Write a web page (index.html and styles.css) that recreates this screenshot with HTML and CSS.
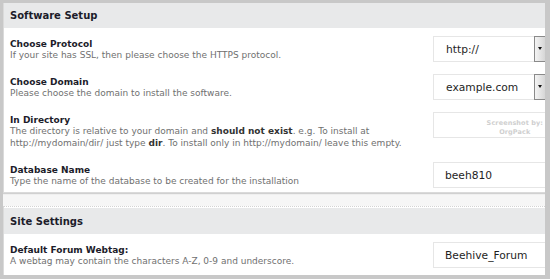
FILE: index.html
```html
<!DOCTYPE html>
<html lang="en">
<head>
    <meta charset="UTF-8">
    <meta name="viewport" content="width=device-width, initial-scale=1.0">
    <title>Software Setup</title>
    <link rel="stylesheet" href="styles.css">
</head>
<body>
    <div class="frame">
        <div class="panel">
            <div class="panel-head">Software Setup</div>

            <div class="row">
                <div class="info">
                    <div class="label">Choose Protocol</div>
                    <div class="desc">If your site has SSL, then please choose the HTTPS protocol.</div>
                </div>
                <div class="field">
                    <div class="select">
                        <span class="val">http://</span>
                        <span class="arrow"></span>
                    </div>
                </div>
            </div>

            <div class="row">
                <div class="info">
                    <div class="label">Choose Domain</div>
                    <div class="desc">Please choose the domain to install the software.</div>
                </div>
                <div class="field">
                    <div class="select">
                        <span class="val">example.com</span>
                        <span class="arrow"></span>
                    </div>
                </div>
            </div>

            <div class="row">
                <div class="info">
                    <div class="label">In Directory</div>
                    <div class="desc">The directory is relative to your domain and <b>should not exist</b>. e.g. To install at http://mydomain/dir/ just type <b>dir</b>. To install only in http://mydomain/ leave this empty.</div>
                </div>
                <div class="field">
                    <div class="input">
                        <span class="val"></span>
                        <span class="mark">Screenshot by:<br>OrgPack</span>
                    </div>
                </div>
            </div>

            <div class="row">
                <div class="info">
                    <div class="label">Database Name</div>
                    <div class="desc">Type the name of the database to be created for the installation</div>
                </div>
                <div class="field">
                    <div class="input"><span class="val">beeh810</span></div>
                </div>
            </div>
        </div>

        <div class="panel second">
            <div class="panel-head">Site Settings</div>

            <div class="row">
                <div class="info">
                    <div class="label">Default Forum Webtag:</div>
                    <div class="desc">A webtag may contain the characters A-Z, 0-9 and underscore.</div>
                </div>
                <div class="field">
                    <div class="input"><span class="val">Beehive_Forum</span></div>
                </div>
            </div>
        </div>
    </div>
</body>
</html>
```

FILE: styles.css
```css
html, body {
    margin: 0;
    padding: 0;
}

body {
    font-family: "DejaVu Sans", Verdana, sans-serif;
    color: #222;
    background: #c8c8c8;
}

.frame {
    width: 542px;
    height: 272px;
    margin: 3px 5px 4px 3px;
    background: #f6f6f6;
    overflow: hidden;
}

.panel {
    background: white;
    border: 1px solid #dadada;
    border-top: none;
    border-right: none;
    box-shadow: 0 1px 1px #d0d0d0;
    overflow: hidden;
}

.panel.second {
    margin-top: 13px;
    border-top: 1px dotted #d4d4d4;
}

.panel-head {
    height: 25px;
    line-height: 25px;
    padding-left: 6px;
    background: #e8e9ea;
    font-size: 10px;
    font-weight: bold;
    color: #1c1c2a;
}

.second .panel-head {
    height: 26px;
    line-height: 27px;
    border-top: 1px solid white;
}

.row {
    display: flex;
    align-items: flex-start;
    padding: 8px 0 4px 6px;
}

.second .row {
    padding-bottom: 7px;
}

.info {
    flex: 1;
    padding: 3px 12px 1px 0;
}

.label {
    font-size: 9px;
    font-weight: bold;
    line-height: 10px;
    color: #1c1c2a;
}

.desc {
    font-size: 9px;
    line-height: 12px;
    color: #707070;
}

.desc b {
    color: #333;
}

.field {
    flex: 0 0 114px;
    margin-right: -2px;
}

.select,
.input {
    position: relative;
    display: flex;
    align-items: center;
    height: 24px;
    border: 1px solid #e6e6e6;
    background: white;
    font-size: 10.7px;
    color: #1e1e1e;
}

.val {
    flex: 1;
    padding-left: 12px;
}

.input .val {
    padding-left: 11px;
}

.arrow {
    position: relative;
    width: 12px;
    height: 26px;
    margin: -1px 0 -1px 0;
    border: 1px solid #8a8a8a;
    background: linear-gradient(to right, #f4f4f4, #d6d6d6);
    box-sizing: border-box;
}

.arrow::after {
    content: "";
    position: absolute;
    left: 3px;
    top: 10px;
    border-left: 2.5px solid transparent;
    border-right: 2.5px solid transparent;
    border-top: 3px solid #111;
}

.mark {
    position: absolute;
    right: 3px;
    top: 6px;
    font-size: 6.5px;
    font-weight: bold;
    line-height: 9px;
    text-align: center;
    color: #cfcfcf;
    letter-spacing: 0.1px;
}
```
